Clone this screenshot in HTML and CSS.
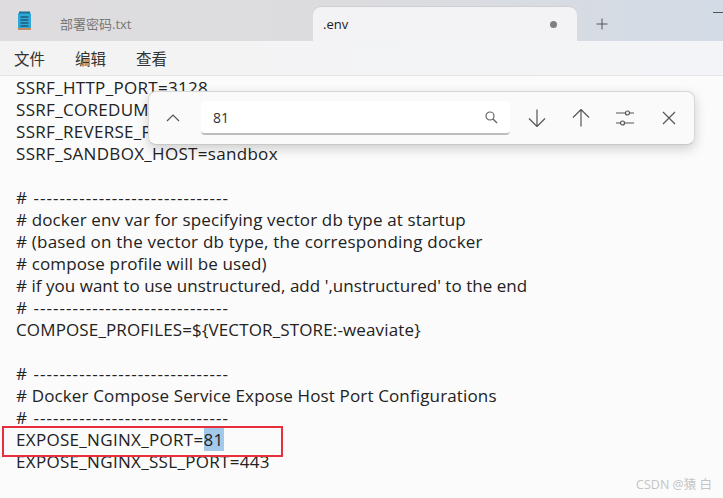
FILE: index.html
```html
<!DOCTYPE html>
<html lang="zh">
<head>
<meta charset="utf-8">
<title>.env</title>
<link rel="stylesheet" href="styles.css">
</head>
<body>
<div class="tabbar">
  <svg class="app-icon" width="16" height="20" viewBox="0 0 16 20">
    <rect x="1" y="2" width="13" height="16" rx="1" fill="#2fa8d8"/>
    <rect x="1" y="17" width="13" height="2" fill="#c58a5e"/>
    <rect x="2" y="0.5" width="11" height="2" fill="#1d6f96"/>
    <path d="M3.500 6h8M3.500 9h8M3.500 12h8M3.500 15h8" stroke="#12394f" stroke-width="1"/>
  </svg>
  <div class="tab-inactive">部署密码.txt</div>
  <div class="tab-active">
    <span class="tab-name">.env</span>
    <span class="dot"></span>
  </div>
  <svg class="plus" width="12" height="12" viewBox="0 0 12 12"><path d="M6 .5v11M.5 6h11" stroke="#555" stroke-width="1"/></svg>
  <span class="minimize"></span>
</div>
<div class="menubar">
  <span>文件</span><span>编辑</span><span>查看</span>
</div>
<main class="editor">
  <div class="caps">SSRF_HTTP_PORT=3128</div>
  <div class="caps">SSRF_COREDUM</div>
  <div class="caps">SSRF_REVERSE_P</div>
  <div class="caps">SSRF_SANDBOX_HOST=sandbox</div>
  <div>&nbsp;</div>
  <div class="rule"># ------------------------------</div>
  <div># docker env var for specifying vector db type at startup</div>
  <div class="wide"># (based on the vector db type, the corresponding docker</div>
  <div># compose profile will be used)</div>
  <div class="tight"># if you want to use unstructured, add ',unstructured' to the end</div>
  <div class="rule"># ------------------------------</div>
  <div>COMPOSE_PROFILES=${VECTOR_STORE:-weaviate}</div>
  <div>&nbsp;</div>
  <div class="rule"># ------------------------------</div>
  <div># Docker Compose Service Expose Host Port Configurations</div>
  <div class="rule"># ------------------------------</div>
  <div class="caps">EXPOSE_NGINX_PORT=<span class="sel">81</span></div>
  <div class="caps">EXPOSE_NGINX_SSL_PORT=443</div>
</main>
<div class="redbox"></div>
<div class="find">
  <svg class="find-caret" width="14" height="8" viewBox="0 0 14 8"><path d="M1 7l6-6 6 6" fill="none" stroke="#555" stroke-width="1.200"/></svg>
  <div class="find-input">
    <span>81</span>
    <svg width="14" height="14" viewBox="0 0 14 14"><circle cx="6" cy="6" r="4" fill="none" stroke="#666" stroke-width="1.200"/><path d="M9 9l4 4" stroke="#666" stroke-width="1.400"/></svg>
  </div>
  <div class="find-tools">
    <svg width="18" height="18" viewBox="0 0 18 18"><path d="M9 .5v17M1 9.500l8 8 8-8" fill="none" stroke="#555" stroke-width="1.200"/></svg>
    <svg width="18" height="18" viewBox="0 0 18 18"><path d="M9 17.500V.5M1 8.500l8-8 8 8" fill="none" stroke="#555" stroke-width="1.200"/></svg>
    <svg width="18" height="16" viewBox="0 0 18 16"><path d="M0 3h9.500M13.500 3H18M0 13h4.500M8.500 13H18" stroke="#555" stroke-width="1.200"/><circle cx="11.500" cy="3" r="2" fill="none" stroke="#555" stroke-width="1.200"/><circle cx="6.500" cy="13" r="2" fill="none" stroke="#555" stroke-width="1.200"/></svg>
    <svg width="18" height="14" viewBox="0 0 18 14"><path d="M3 1l12 12M15 1L3 13" stroke="#555" stroke-width="1.200"/></svg>
  </div>
</div>
<div class="watermark">CSDN @猿 白</div>
</body>
</html>
```
FILE: styles.css
```css
* { box-sizing: border-box; }
html, body { margin: 0; height: 100%; }
body {
  width: 723px;
  height: 498px;
  overflow: hidden;
  position: relative;
  background: #fbfbfb;
  color: #1c1c1c;
  font-family: "Open Sans", "Noto Sans CJK SC", sans-serif;
  display: flex;
  flex-direction: column;
}
.tabbar {
  height: 41px;
  flex: none;
  display: flex;
  align-items: flex-end;
  background: linear-gradient(90deg, #dedcde 0%, #dcdcdf 50%, #d3dbe6 100%);
  position: relative;
}
.app-icon { align-self: center; margin-left: 17px; flex: none; }
.tab-inactive {
  align-self: center;
  margin-left: 27px;
  margin-top: 6px;
  width: 253px;
  font-size: 13px;
  color: #777;
}
.tab-active {
  width: 264px;
  height: 34px;
  background: #f3f3f5;
  border-radius: 8px 8px 0 0;
  box-shadow: 0 -1px 0 #cfcfd3;
  display: flex;
  align-items: center;
  justify-content: space-between;
  padding: 0 20px 0 10px;
  font-size: 13px;
  color: #222;
}
.dot { width: 7px; height: 7px; border-radius: 50%; background: #808080; }
.plus { align-self: center; margin-left: 19px; margin-top: 7px; }
.minimize {
  position: absolute;
  right: 0;
  top: 12px;
  width: 10px;
  height: 1px;
  background: #555;
}
.menubar {
  height: 35px;
  flex: none;
  display: flex;
  align-items: center;
  gap: 30px;
  padding: 0 14px;
  background: linear-gradient(90deg, #f3f3f3, #f3f4f7);
  border-bottom: 1px solid #e5e5e5;
  font-size: 15.500px;
  color: #333;
}
.editor {
  flex: 1;
  padding: 1px 0 0 16px;
  font-size: 17px;
  line-height: 22px;
  letter-spacing: .14px;
  white-space: nowrap;
  color: #222;
}
.caps { letter-spacing: .31px; }
.tight { letter-spacing: .03px; }
.wide { letter-spacing: .21px; }
.rule { letter-spacing: 1.050px; }
.sel { background: #a3c9ea; }
.redbox {
  position: absolute;
  left: 2px;
  top: 426px;
  width: 281px;
  height: 31px;
  border: 2px solid #e8303c;
}
.find {
  position: absolute;
  left: 148px;
  top: 91px;
  width: 547px;
  height: 54px;
  display: flex;
  align-items: center;
  background: #fafafa;
  border: 1px solid #d8d8d8;
  border-bottom-color: #c8c8c8;
  border-radius: 8px;
  box-shadow: 0 4px 12px rgba(0, 0, 0, .18);
}
.find-caret { margin-left: 17px; flex: none; }
.find-input {
  margin-left: 21px;
  width: 309px;
  height: 34px;
  background: #fff;
  border-radius: 4px;
  border-bottom: 2px solid #bdbdbd;
  display: flex;
  align-items: center;
  justify-content: space-between;
  padding: 0 12px;
  font-size: 14px;
  color: #333;
}
.find-tools {
  flex: 1;
  display: flex;
  align-items: center;
  justify-content: space-between;
  padding: 0 16px 0 18px;
}
.watermark {
  position: absolute;
  right: 11px;
  top: 477px;
  font-size: 12.500px;
  line-height: 16px;
  color: #c4c4c4;
}
```
